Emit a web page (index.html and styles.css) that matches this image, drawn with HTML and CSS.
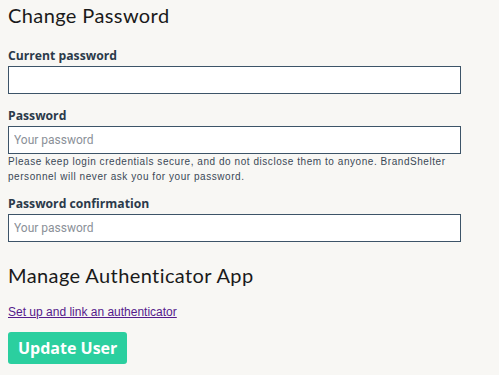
FILE: index.html
```html
<html>

<head>
    <link rel="stylesheet" href="styles.css">
    <title>Change Password</title>
</head>

<body>
    <h2 class="title">Change Password</h2>

    <form class="user-form">
        <div class="field">
            <label class="label" for="current">Current password</label>
            <input class="input" id="current" type="password">
        </div>

        <div class="field field-hint">
            <label class="label" for="password">Password</label>
            <input class="input" id="password" type="password" placeholder="Your password">
            <p class="hint">Please keep login credentials secure, and do not disclose them to anyone. BrandShelter personnel will never ask you for your password.</p>
        </div>

        <div class="field field-last">
            <label class="label" for="confirm">Password confirmation</label>
            <input class="input" id="confirm" type="password" placeholder="Your password">
        </div>

        <h2 class="title title-auth">Manage Authenticator App</h2>

        <p class="link-row"><a class="link" href="#">Set up and link an authenticator</a></p>

        <button class="button" type="button">Update User</button>
    </form>
</body>

</html>
```

FILE: styles.css
```css
body {
    margin: 0;
    padding: 0 8px;
    background: #f8f7f4;
    font-family: Lato, sans-serif;
    color: #1d1d1d;
}

.title {
    margin: 0;
    padding-top: 3px;
    font-family: Lato, sans-serif;
    font-weight: 400;
    font-size: 20px;
    line-height: 24px;
    letter-spacing: 0.4px;
    color: #1a1a1a;
}

.user-form {
    margin-top: 21px;
}

.field {
    margin-bottom: 14px;
}

.field-hint {
    margin-bottom: 12px;
}

.field-last {
    margin-bottom: 0;
}

.label {
    display: block;
    font-family: "Open Sans", sans-serif;
    font-weight: 700;
    font-size: 12.2px;
    line-height: 16px;
    color: #2b3a4a;
    margin-bottom: 2px;
}

.input {
    display: block;
    box-sizing: border-box;
    width: 453px;
    height: 28px;
    margin: 0;
    padding: 0 5px;
    border: 1px solid #3d5468;
    background: #fff;
    font-family: Roboto, sans-serif;
    font-size: 12px;
    color: #222;
}

.input::placeholder {
    color: #8b9098;
}

.hint {
    margin: 0;
    font-family: "Liberation Sans", Arial, sans-serif;
    font-size: 10px;
    line-height: 15px;
    letter-spacing: 0.55px;
    color: #3a4856;
}

.title-auth {
    margin-top: 21px;
    padding-top: 0;
}

.link-row {
    margin: 18px 0 13px;
    font-family: "Liberation Sans", Arial, sans-serif;
    font-size: 12px;
    line-height: 14px;
}

.link {
    color: #551a8b;
}

.button {
    display: block;
    height: 32px;
    padding: 0 10px;
    border: none;
    border-radius: 3px;
    background: #2bcf9f;
    color: #fff;
    font-family: "Open Sans", sans-serif;
    font-weight: 700;
    font-size: 16px;
}
```
